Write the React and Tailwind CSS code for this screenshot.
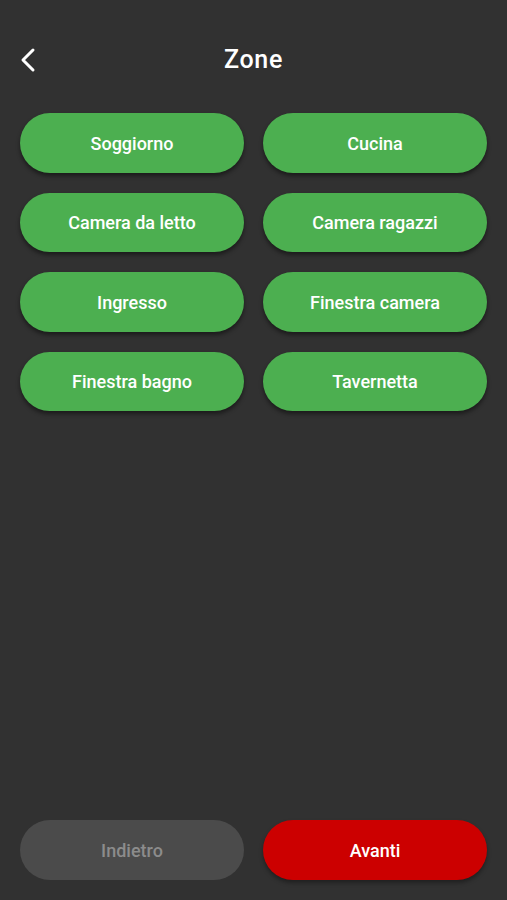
import React from 'react';

const zones = [
    'Soggiorno',
    'Cucina',
    'Camera da letto',
    'Camera ragazzi',
    'Ingresso',
    'Finestra camera',
    'Finestra bagno',
    'Tavernetta',
];

const App = () => {
    return (
        <div
            className="flex flex-col h-[900px] w-full bg-[#313131] px-5 pb-5"
            style={{ fontFamily: 'Roboto, "Noto Sans", sans-serif' }}
        >
            <header className="relative flex items-center justify-center h-[60px] mt-[30px]">
                <button className="absolute left-0 top-1/2 -translate-y-1/2 text-white">
                    <svg width="18" height="26" viewBox="0 0 18 26" fill="none">
                        <path d="M13 3 L3 13 L13 23" stroke="white" strokeWidth="3" strokeLinecap="round" strokeLinejoin="round" />
                    </svg>
                </button>
                <h1 className="text-[25px] font-medium text-white tracking-wide">Zone</h1>
            </header>

            <div className="grid grid-cols-2 gap-x-[19px] gap-y-[20px] mt-[23px]">
                {zones.map((zone) => (
                    <button
                        key={zone}
                        className="h-[59.5px] rounded-full bg-[#4caf50] text-white text-[18px] font-medium pt-[1px] shadow-[0_3px_4px_rgba(0,0,0,0.45)]"
                    >
                        {zone}
                    </button>
                ))}
            </div>

            <div className="flex-1" />

            <div className="grid grid-cols-2 gap-x-[19px]">
                <button className="h-[60px] rounded-full bg-[#4b4b4b] text-[#8c8c8c] text-[18px] font-medium">
                    Indietro
                </button>
                <button className="h-[60px] rounded-full bg-[#cc0000] text-white text-[18px] font-medium shadow-[0_3px_4px_rgba(0,0,0,0.35)]">
                    Avanti
                </button>
            </div>
        </div>
    );
};

export default App;
